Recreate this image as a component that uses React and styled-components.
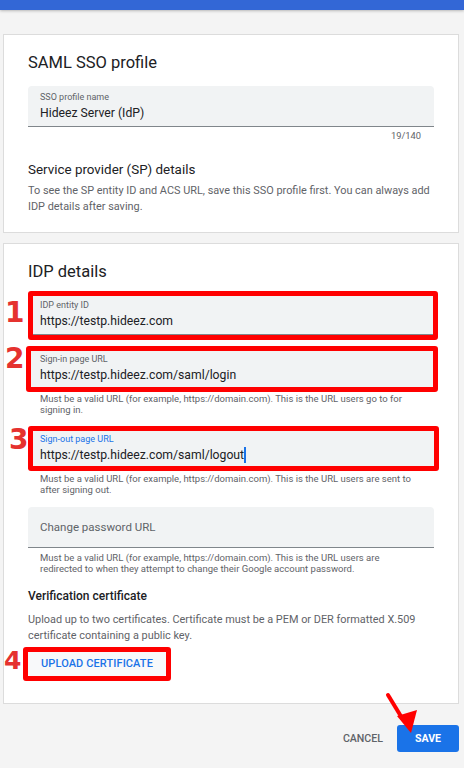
import React from "react";
import styled, { createGlobalStyle } from "styled-components";

const GlobalStyle = createGlobalStyle`
  html, body { margin: 0; padding: 0; }
  body {
    background: #f4f4f4;
    font-family: Roboto, "Noto Sans", Arial, sans-serif;
    color: #202124;
  }
  * { box-sizing: border-box; }
`;

const Page = styled.div`
  position: relative;
  width: 464px;
  min-height: 768px;
  overflow: hidden;
`;

const TopBar = styled.div`
  height: 10px;
  background: #3367d6;
  box-shadow: 0 1px 3px rgba(0, 0, 0, 0.25);
`;

const Main = styled.div`
  padding: 24px 5px 0 3px;
  display: flex;
  flex-direction: column;
  gap: 10px;
`;

const Card = styled.section`
  background: #fff;
  border: 1px solid #dcdcdc;
  padding: 16px 24px ${(p) => p.$pb}px 24px;
  display: flex;
  flex-direction: column;
`;

const Title = styled.h2`
  margin: 0;
  font-size: 16.5px;
  line-height: 24px;
  font-weight: 400;
  color: #202124;
`;

const FieldWrap = styled.div`
  position: relative;
  margin-top: ${(p) => p.$mt}px;
`;

const Input = styled.div`
  height: 41px;
  background: #f1f3f4;
  border-radius: 4px 4px 0 0;
  border-bottom: 1px solid #80868b;
  padding: 5px 12px 0 12px;
  display: flex;
  flex-direction: column;
  justify-content: ${(p) => (p.$empty ? "center" : "flex-start")};
  padding-top: ${(p) => (p.$empty ? "0" : "5px")};
`;

const Label = styled.div`
  font-size: 9px;
  line-height: 12px;
  color: ${(p) => (p.$focused ? "#1a73e8" : "#5f6368")};
`;

const Value = styled.div`
  font-size: 12.2px;
  line-height: 16px;
  margin-top: 2px;
  color: #202124;
  display: flex;
  align-items: center;
`;

const Placeholder = styled.div`
  font-size: 11.5px;
  line-height: 16px;
  color: #5f6368;
`;

const Caret = styled.span`
  display: inline-block;
  width: 2px;
  height: 16px;
  background: #1a73e8;
`;

const Frame = styled.div`
  position: absolute;
  top: ${(p) => p.$t}px;
  bottom: ${(p) => p.$b}px;
  left: ${(p) => p.$l}px;
  right: ${(p) => p.$r}px;
  border: 5px solid #ff0000;
  border-radius: 3px;
  pointer-events: none;
`;

const Badge = styled.div`
  position: absolute;
  left: ${(p) => p.$x}px;
  top: ${(p) => p.$y}px;
  font-family: "DejaVu Sans", sans-serif;
  font-weight: 700;
  font-size: ${(p) => p.$size}px;
  line-height: 1;
  color: #e5322f;
`;

const Counter = styled.div`
  margin-top: 3px;
  padding-right: 13px;
  text-align: right;
  font-size: 9.3px;
  line-height: 12px;
  color: #5f6368;
`;

const SubTitle = styled.h3`
  margin: ${(p) => p.$mt}px 0 0;
  font-size: ${(p) => p.$size}px;
  line-height: ${(p) => p.$lh}px;
  font-weight: ${(p) => p.$weight};
  color: #202124;
`;

const Description = styled.p`
  margin: ${(p) => p.$mt}px 0 0;
  font-size: 10.9px;
  line-height: 16px;
  color: #5f6368;
`;

const Helper = styled.div`
  margin-top: 4px;
  padding: 0 18px 0 12px;
  font-size: 9.5px;
  line-height: 11px;
  color: #5f6368;
`;

const ButtonWrap = styled.div`
  position: relative;
  margin-top: 6px;
  align-self: flex-start;
`;

const TextButton = styled.button`
  height: 26px;
  width: 138px;
  border: none;
  border-radius: 3px;
  background: #f8f9fa;
  color: #1a73e8;
  font-family: Roboto, sans-serif;
  font-size: 11px;
  font-weight: 500;
  letter-spacing: 0.1px;
  padding: 0;
  cursor: pointer;
`;

const Footer = styled.div`
  margin-top: 21px;
  padding-right: 5px;
  display: flex;
  justify-content: flex-end;
  align-items: center;
  gap: 6px;
`;

const CancelButton = styled.button`
  border: none;
  background: transparent;
  font-family: Roboto, sans-serif;
  font-size: 10.6px;
  font-weight: 500;
  color: #5f6368;
  height: 26px;
  padding: 0 8px;
`;

const SaveButton = styled.button`
  border: none;
  background: #1a73e8;
  color: #fff;
  border-radius: 3px;
  width: 62px;
  height: 27px;
  font-family: Roboto, sans-serif;
  font-size: 10.6px;
  font-weight: 700;
  padding: 0;
`;

const Arrow = styled.svg`
  position: absolute;
  left: 380px;
  top: 688px;
  pointer-events: none;
`;

function Field({ mt = 0, label, value, placeholder, focused, caret, frame, badge }) {
  return (
    <FieldWrap $mt={mt}>
      <Input $empty={!label}>
        {label ? (
          <>
            <Label $focused={focused}>{label}</Label>
            <Value>
              {value}
              {caret && <Caret />}
            </Value>
          </>
        ) : (
          <Placeholder>{placeholder}</Placeholder>
        )}
      </Input>
      {frame && <Frame $t={frame[0]} $r={frame[1]} $b={frame[2]} $l={frame[3]} />}
      {badge && (
        <Badge $x={badge.x} $y={badge.y} $size={badge.size}>
          {badge.n}
        </Badge>
      )}
    </FieldWrap>
  );
}

export default function App() {
  return (
    <>
      <GlobalStyle />
      <Page>
        <TopBar />
        <Main>
          <Card $pb={17}>
            <Title>SAML SSO profile</Title>
            <Field mt={11} label="SSO profile name" value="Hideez Server (IdP)" />
            <Counter>19/140</Counter>
            <SubTitle $mt={18} $size={13.4} $lh={20} $weight={400}>
              Service provider (SP) details
            </SubTitle>
            <Description $mt={3}>
              To see the SP entity ID and ACS URL, save this SSO profile first. You can always add
              IDP details after saving.
            </Description>
          </Card>

          <Card $pb={27}>
            <Title>IDP details</Title>
            <Field
              mt={10}
              label="IDP entity ID"
              value="https://testp.hideez.com"
              frame={[-3, -4, -5, 0]}
              badge={{ n: "1", x: -23, y: 5, size: 28 }}
            />
            <Field
              mt={13}
              label="Sign-in page URL"
              value="https://testp.hideez.com/saml/login"
              frame={[-2, -4, -3, -2]}
              badge={{ n: "2", x: -23, y: -3, size: 28 }}
            />
            <Helper>
              Must be a valid URL (for example, https://domain.com). This is the URL users go to for
              signing in.
            </Helper>
            <Field
              mt={13}
              label="Sign-out page URL"
              value="https://testp.hideez.com/saml/logout"
              focused
              caret
              frame={[-2, -5, -2, 0]}
              badge={{ n: "3", x: -19, y: -2, size: 28 }}
            />
            <Helper>
              Must be a valid URL (for example, https://domain.com). This is the URL users are sent to
              after signing out.
            </Helper>
            <Field mt={12} placeholder="Change password URL" />
            <Helper>
              Must be a valid URL (for example, https://domain.com). This is the URL users are
              redirected to when they attempt to change their Google account password.
            </Helper>
            <SubTitle $mt={13} $size={12} $lh={18} $weight={500}>
              Verification certificate
            </SubTitle>
            <Description $mt={7}>
              Upload up to two certificates. Certificate must be a PEM or DER formatted X.509
              certificate containing a public key.
            </Description>
            <ButtonWrap>
              <TextButton>UPLOAD CERTIFICATE</TextButton>
              <Frame $t={-3} $r={-5} $b={-5} $l={-5} />
              <Badge $x={-24} $y={-2} $size={25}>
                4
              </Badge>
            </ButtonWrap>
          </Card>
        </Main>
        <Footer>
          <CancelButton>CANCEL</CancelButton>
          <SaveButton>SAVE</SaveButton>
        </Footer>
        <Arrow width="50" height="60" viewBox="0 0 50 60">
          <line x1="8" y1="7" x2="22" y2="30" stroke="#ff0000" strokeWidth="4" strokeLinecap="round" />
          <polygon points="31,45 17,28 37,22" fill="#ff0000" />
        </Arrow>
      </Page>
    </>
  );
}
